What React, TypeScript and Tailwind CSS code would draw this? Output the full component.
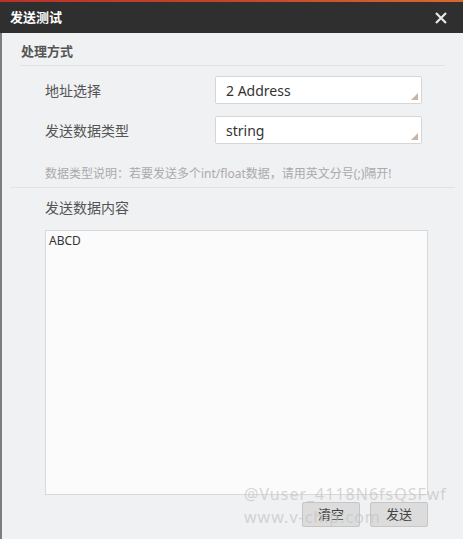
import React from "react";

const font = { fontFamily: '"Noto Sans", "Noto Sans CJK SC", sans-serif' };

function SelectBox({ value }: { value: string }) {
  return (
    <div className="relative flex h-[28px] w-[207px] items-center rounded-[2px] border border-[#d6d6d6] bg-white pl-[10px] text-[14px] text-[#333]">
      {value}
      <span className="absolute bottom-[3px] right-[3px] h-0 w-0 border-b-[7px] border-l-[7px] border-b-[#c9b5a6] border-l-transparent" />
    </div>
  );
}

export default function App() {
  return (
    <div className="relative flex h-[539px] w-[463px] flex-col overflow-hidden bg-[#f0f1f3]" style={font}>
      <div className="h-[2px] bg-gradient-to-r from-[#b8322a] via-[#c2452c] to-[#d8682e]" />
      <div className="flex h-[31px] items-center justify-between bg-[#2f2f2f] pl-[10px] pr-[16px]">
        <span className="text-[13px] font-bold text-white">发送测试</span>
        <svg width="12" height="12" viewBox="0 0 12 12">
          <path d="M1 1 L11 11 M11 1 L1 11" stroke="#e8e8e8" strokeWidth="2.2" />
        </svg>
      </div>

      <div className="flex flex-1 flex-col border-l-2 border-[#7d7d7d]">
        <div className="mx-[18px] flex h-[33px] items-center border-b border-[#e1e2e4] pl-[1px] pt-[5px] text-[13px] font-bold text-[#555]">
          处理方式
        </div>

        <div className="flex flex-col gap-[12px] pl-[43px] pt-[10px]">
          <div className="flex items-center">
            <span className="w-[170px] text-[14px] text-[#555]">地址选择</span>
            <SelectBox value="2 Address" />
          </div>
          <div className="flex items-center">
            <span className="w-[170px] text-[14px] text-[#555]">发送数据类型</span>
            <SelectBox value="string" />
          </div>
        </div>

        <div className="mx-[8px] mt-[21px] border-b border-[#e1e2e4] pb-[4px] pl-[35px] text-[12px] text-[#aaa]">
          数据类型说明：若要发送多个int/float数据，请用英文分号(;)隔开!
        </div>

        <div className="pl-[43px] pt-[9px] text-[14px] text-[#555]">发送数据内容</div>

        <div className="ml-[43px] mt-[12px] h-[265px] w-[383px] border border-[#d9d9d9] bg-[#fbfbfb] px-[3px] pt-[1px] text-[12px] text-[#333]">
          ABCD
        </div>

        <div className="mt-[7px] flex gap-[10px] pl-[300px]">
          <button className="h-[25px] w-[58px] rounded-[2px] border border-[#c6c6c6] bg-[#dcdcdc] text-[13px] text-[#444]">
            清空
          </button>
          <button className="h-[25px] w-[58px] rounded-[2px] border border-[#c6c6c6] bg-[#dcdcdc] text-[13px] text-[#444]">
            发送
          </button>
        </div>
      </div>

      <div className="pointer-events-none absolute left-[244px] top-[483px] flex flex-col text-[16px] leading-[23px] tracking-[1px] text-[#c4c4c4]/70">
        <span>@Vuser_4118N6fsQSFwf</span>
        <span>www.v-chip.com</span>
      </div>
    </div>
  );
}
